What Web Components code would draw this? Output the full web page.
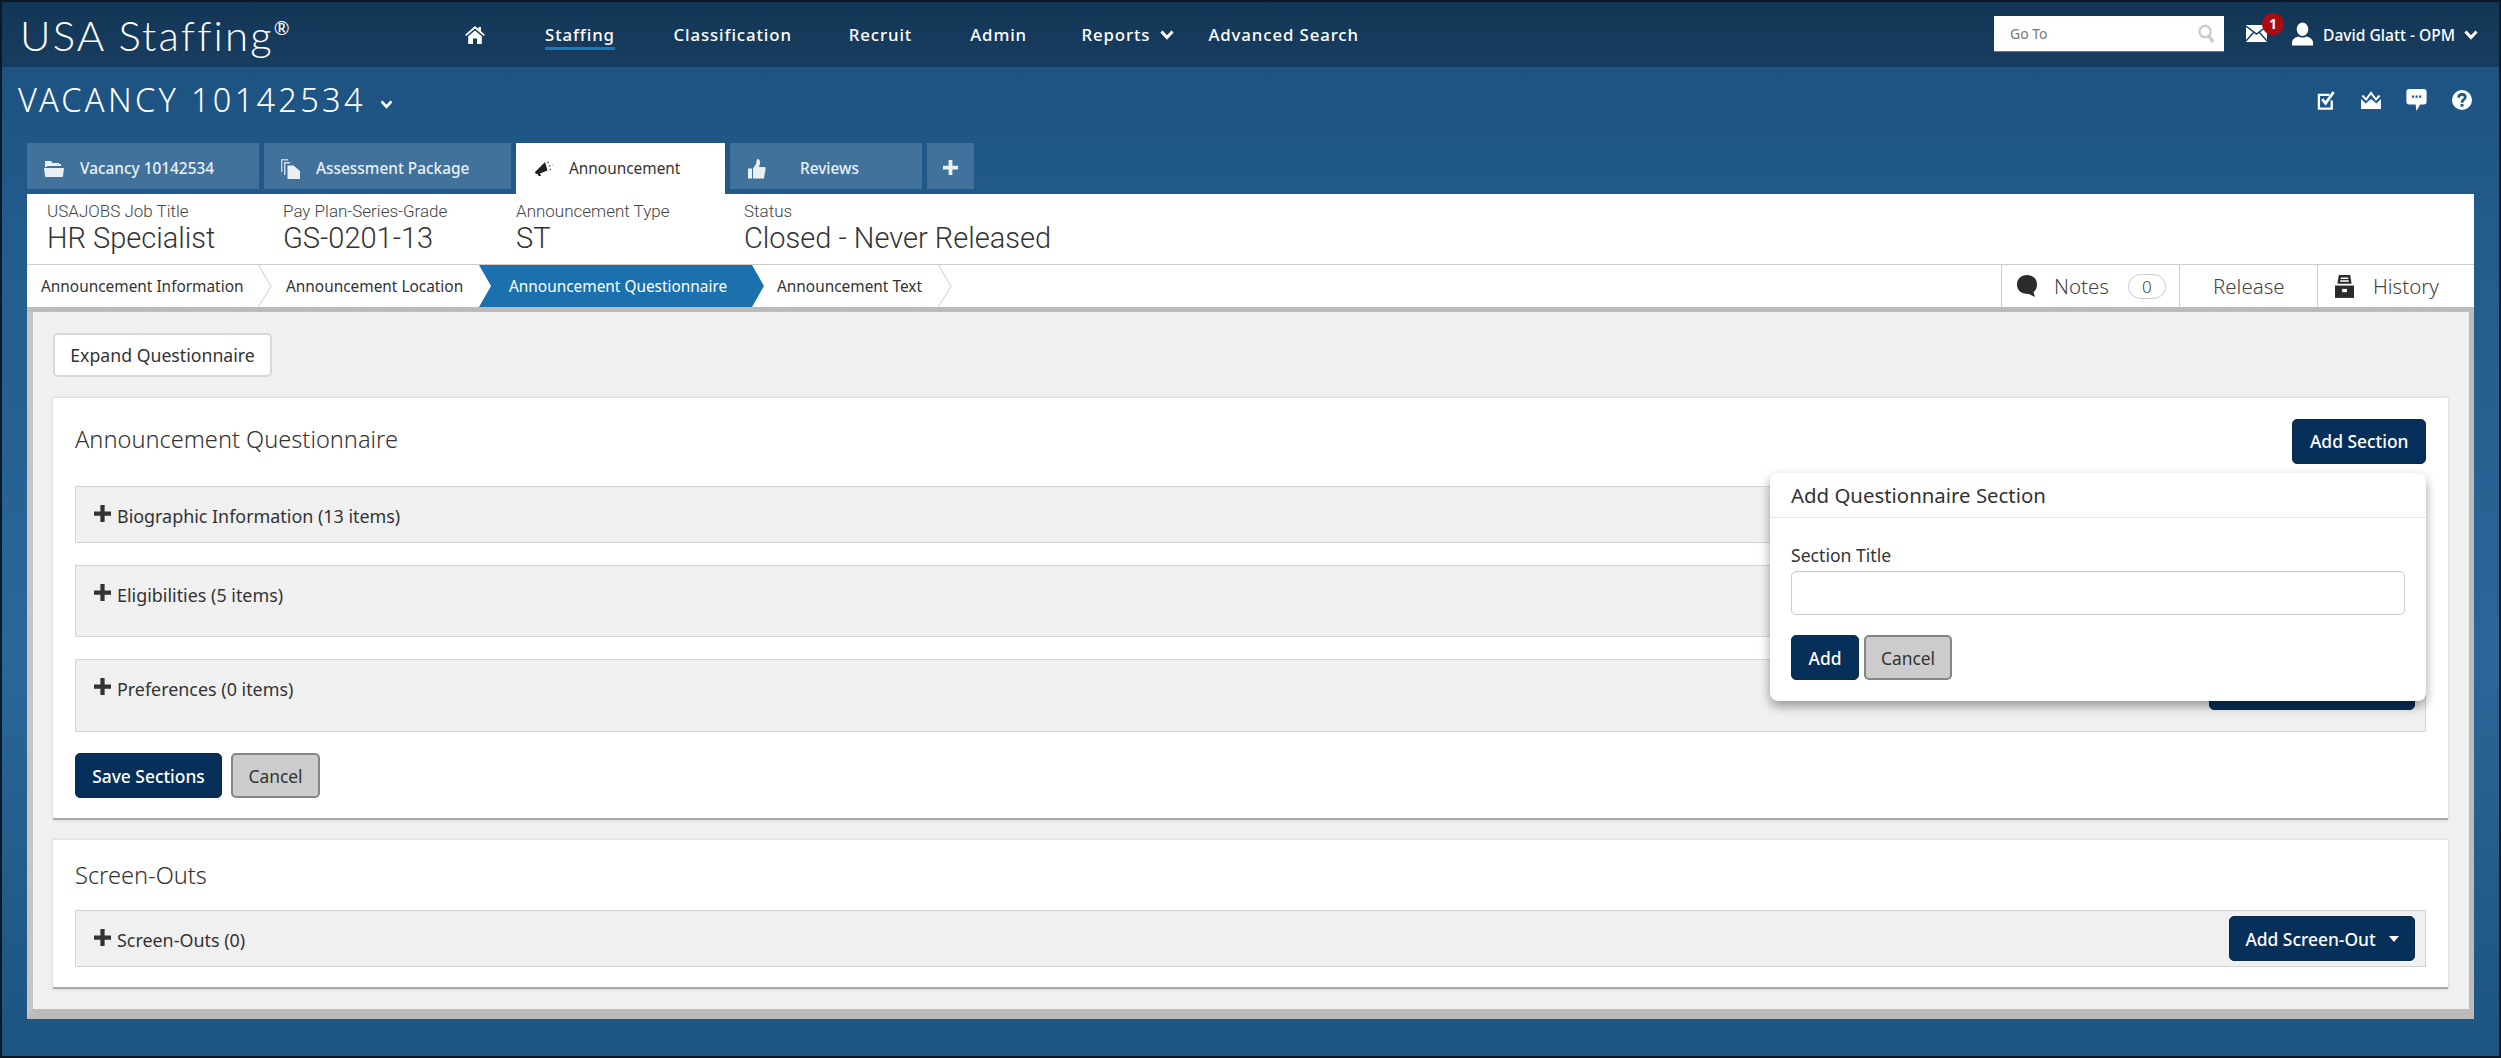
<!DOCTYPE html>
<html lang="en">
<head>
<meta charset="utf-8">
<title>USA Staffing - Vacancy 10142534</title>
<style>
  html, body { margin: 0; padding: 0; }
  body { width: 2501px; height: 1058px; overflow: hidden; font-family: "Noto Sans", "Open Sans", sans-serif; color: #333; }
</style>
</head>
<body>
<usa-page>
  <usa-header slot="header"></usa-header>
  <vacancy-bar slot="bar" title-text="VACANCY 10142534"></vacancy-bar>
  <tab-strip slot="tabs"></tab-strip>
  <info-summary slot="panel"></info-summary>
  <step-nav slot="panel"></step-nav>
  <panel-body slot="panel">
    <usa-button kind="light" style="width:219px">Expand Questionnaire</usa-button>

    <q-card heading="Announcement Questionnaire" style="height:422px">
      <usa-button slot="action" kind="primary" style="width:133.6px">Add Section</usa-button>
      <q-row style="height:57px">Biographic Information (13 items)</q-row>
      <q-row style="height:72px">Eligibilities (5 items)</q-row>
      <q-row style="height:73px">Preferences (0 items)
        <usa-button slot="action" kind="primary" style="width:206px"></usa-button>
      </q-row>
      <div slot="footer" style="display:flex;gap:9px">
        <usa-button kind="primary" style="width:147px">Save Sections</usa-button>
        <usa-button kind="cancel" style="width:89px">Cancel</usa-button>
      </div>
      <add-section-popover slot="over"></add-section-popover>
    </q-card>

    <q-card heading="Screen-Outs" compact style="height:149px;margin-top:20px">
      <q-row style="height:57px">Screen-Outs (0)
        <usa-button slot="action" kind="primary" caret style="width:186px">Add Screen-Out</usa-button>
      </q-row>
    </q-card>
  </panel-body>
</usa-page>

<script>
const ICONS = {
  home: '<svg viewBox="0 0 20 18" width="20" height="18"><path fill="currentColor" d="M10 0 L13.5 3 V1 H16 V5.2 L20 8.8 L18.7 10 L10 2.6 L1.3 10 L0 8.8Z M3.2 10.2 L10 4.4 L16.8 10.2 V18 H12 V12.5 H8 V18 H3.2Z"/></svg>',
  folder: '<svg viewBox="0 0 20 16" width="20" height="16"><path fill="currentColor" d="M1 0 H7 L8.5 2 H15 L15 3 H17 V5 H3 V6 H1Z"/><path fill="currentColor" d="M0 7 H20 L19 15 Q19 16 18 16 H2 Q1 16 1 15Z"/></svg>',
  files: '<svg viewBox="0 0 19 20" width="19" height="20"><path fill="none" stroke="currentColor" stroke-opacity=".75" stroke-width="1.4" d="M7 .7 H.7 V13"/><path fill="none" stroke="currentColor" stroke-opacity=".85" stroke-width="1.4" d="M9 3.7 H3.7 V16"/><path fill="currentColor" d="M6.5 6.5 H12.5 L19 12 V20 H6.5Z"/></svg>',
  bullhorn: '<svg viewBox="0 0 18 15" width="18" height="15"><path fill="#222" d="M0 11 L10 1 L12.5 9.5 L5 12.4 L6 15 L3.5 15 L2.6 12.8 Q0 13.5 0 11Z"/><path fill="none" stroke="#555" stroke-width="1.3" stroke-dasharray="1.6 1.6" d="M12.5 2 L14.5 0 M14 5 L17.5 4 M14.5 8 L17 9"/></svg>',
  thumb: '<svg viewBox="0 0 19 20" width="19" height="20"><path fill="currentColor" d="M1 9.5 H5 V19.5 H1Z M6 9.5 L9 5 L10 0 Q13.5 0 13 4.5 L12 8 H17.5 Q19 8 18.6 9.8 L17 19.5 H6Z"/></svg>',
  plus: '<svg viewBox="0 0 16 16" width="16" height="16"><path fill="currentColor" d="M6 0 H10 V6 H16 V10 H10 V16 H6 V10 H0 V6 H6Z"/></svg>',
  chevron: '<svg viewBox="0 0 14 10" width="14" height="10"><path fill="none" stroke="currentColor" stroke-width="3" d="M1.5 1.5 L7 7.5 L12.5 1.5"/></svg>',
  search: '<svg viewBox="0 0 18 20" width="17" height="20"><circle cx="7.5" cy="7.5" r="6" fill="none" stroke="#ccc" stroke-width="2.4"/><path stroke="#ccc" stroke-width="3.4" d="M11.5 12 L16 18.5"/></svg>',
  mail: '<svg viewBox="0 0 21 17" width="21" height="17"><path fill="currentColor" d="M0 0 H21 V17 H0Z"/><path fill="none" stroke="#14395b" stroke-width="1.4" d="M0 1 L10.5 9 L21 1 M0 16 L7.5 7.5 M21 16 L13.5 7.5"/></svg>',
  user: '<svg viewBox="0 0 22 24" width="21" height="24"><ellipse cx="11" cy="7" rx="6" ry="7" fill="currentColor"/><path fill="currentColor" d="M0 24 V20 Q1 16 7 14.5 Q11 17 15 14.5 Q21 16 22 20 V24Z"/></svg>',
  check: '<svg viewBox="0 0 20 20" width="19" height="19"><path fill="none" stroke="currentColor" stroke-width="2.4" d="M15.5 10 V18.5 H2 V4 H13"/><path fill="none" stroke="currentColor" stroke-width="3" d="M5.5 8.5 L9 13 L17.5 1"/></svg>',
  mailopen: '<svg viewBox="0 0 22 20" width="20" height="18"><path fill="currentColor" d="M0 9 L5 14 L11 9 L17 14 L22 9 V20 H0Z"/><path fill="none" stroke="currentColor" stroke-width="2.2" d="M1.5 5 L5.5 9.5 L11 2 L16.5 9.5 L20.5 5"/></svg>',
  comment: '<svg viewBox="0 0 22 24" width="21" height="22"><path fill="currentColor" d="M3 0 H19 Q22 0 22 3 V14 Q22 17 19 17 H15 L11 24 L10 17 H3 Q0 17 0 14 V3 Q0 0 3 0Z"/><path fill="#1e5683" d="M6 7 H8.4 V9.6 H6Z M9.9 7 H12.3 V9.6 H9.9Z M13.8 7 H16.2 V9.6 H13.8Z"/></svg>',
  question: '<svg viewBox="0 0 22 22" width="20" height="20"><circle cx="11" cy="11" r="11" fill="currentColor"/><path fill="none" stroke="#1e5683" stroke-width="3" d="M7.2 8.5 Q7.5 4.8 11 4.8 Q14.6 4.8 14.6 8 Q14.6 9.8 12.6 10.9 Q11 11.8 11 14"/><path fill="#1e5683" d="M9.4 15.4 H12.6 V18.4 H9.4Z"/></svg>',
  bubble: '<svg viewBox="0 0 20 22" width="20" height="22"><path fill="#2b2b2b" d="M10 0 C16 0 20 4 20 9.5 C20 14 17.5 16.5 16.5 17 L18 22 L12 19 C5 19.5 0 15.5 0 9.5 C0 4 4 0 10 0Z"/></svg>',
  archive: '<svg viewBox="0 0 20 24" width="19" height="23"><path fill="#2b2b2b" d="M4 0 H16 L17.5 9 H2.5Z"/><path fill="#fff" d="M6 2.5 H14 V4 H6Z M5.5 5.5 H14.5 V7 H5.5Z"/><path fill="#2b2b2b" d="M0 11 H20 V24 H0Z"/><path fill="#fff" d="M7.5 14.5 H12.5 V18 H7.5Z"/></svg>'
};

class UsaPage extends HTMLElement {
  constructor() {
    super();
    this.attachShadow({mode: 'open'});
    this.shadowRoot.innerHTML = `
      <style>
        :host {
          display: flex; flex-direction: column;
          box-sizing: border-box; width: 2501px; height: 1058px;
          border: 2px solid #0b1a28;
          background: linear-gradient(180deg, #1b4e7c 0, #225c8c 220px, #2a6698 660px, #1d5682 1020px);
        }
        .panel { margin: 0 25px; background: #fff; display: flex; flex-direction: column; }
      </style>
      <slot name="header"></slot>
      <slot name="bar"></slot>
      <slot name="tabs"></slot>
      <div class="panel"><slot name="panel"></slot></div>
    `;
  }
}

class UsaHeader extends HTMLElement {
  constructor() {
    super();
    this.attachShadow({mode: 'open'});
    this.shadowRoot.innerHTML = `
      <style>
        :host {
          display: flex; align-items: center; height: 65px; color: #fff;
          background: linear-gradient(180deg, #133655, #173d60);
        }
        .logo { font: 300 42px "Lato", sans-serif; letter-spacing: 2.1px; margin-left: 18px; width: 445px; display: flex; height: 65px; align-items: center; }
        .logo sup { font-size: 19px; font-weight: 400; letter-spacing: 0; line-height: 1; align-self: flex-start; margin: 16px 0 0 0; }
        nav { display: flex; align-items: center; height: 65px; font: 500 16.8px "Noto Sans", sans-serif; letter-spacing: .9px; }
        nav a { display: block; position: relative; line-height: 24px; white-space: nowrap; }
        nav svg { display: block; }
        .on::after { content: ""; position: absolute; left: 0; right: 0; bottom: -3px; height: 3px; background: #1a7abf; }
        .right { margin-left: auto; display: flex; align-items: center; height: 65px; }
        .goto {
          box-sizing: border-box; width: 230px; height: 35px; background: #fff; color: #777;
          display: flex; align-items: center; justify-content: space-between;
          font: 14px "Noto Sans", sans-serif; padding: 0 9px 0 16px; margin-top: -2px;
          box-shadow: 0 1px 0 #5d7d99;
        }
        .mail { position: relative; margin: -2px 0 0 22px; width: 21px; height: 17px; }
        .mail svg { display: block; }
        .badge {
          position: absolute; left: 16px; top: -12px; width: 22px; height: 22px; border-radius: 50%;
          background: #a90d12; color: #fff; font: 700 14px/22px "Noto Sans", sans-serif; text-align: center;
        }
        .user { margin: -2px 0 0 25px; display: flex; }
        .name { font: 500 15.6px "Noto Sans", sans-serif; margin-left: 10px; white-space: nowrap; width: 141px; }
        .chev { margin-right: 21px; display: flex; }
      </style>
      <div class="logo">USA Staffing<sup>®</sup></div>
      <nav>
        <a style="color:#fff">${ICONS.home}</a>
        <a class="on" style="margin-left:60px">Staffing</a>
        <a style="margin-left:58.6px">Classification</a>
        <a style="margin-left:57px">Recruit</a>
        <a style="margin-left:58px">Admin</a>
        <a style="margin-left:54.5px">Reports</a>
        <a style="margin-left:10px">${ICONS.chevron}</a>
        <a style="margin-left:34px">Advanced Search</a>
      </nav>
      <div class="right">
        <div class="goto"><span>Go To</span>${ICONS.search}</div>
        <div class="mail">${ICONS.mail}<span class="badge">1</span></div>
        <div class="user">${ICONS.user}</div>
        <div class="name">David Glatt - OPM</div>
        <div class="chev">${ICONS.chevron}</div>
      </div>
    `;
  }
}

class VacancyBar extends HTMLElement {
  constructor() {
    super();
    this.attachShadow({mode: 'open'});
    this.shadowRoot.innerHTML = `
      <style>
        :host { display: flex; align-items: flex-start; height: 76px; color: #fff; }
        h1 { margin: 10px 0 0 16px; font: 300 32.5px/46px "Noto Sans", sans-serif; letter-spacing: 3.3px; white-space: nowrap; }
        .down { margin: 33px 0 0 14px; display: flex; }
        .down svg { width: 13px; height: 9px; }
        .tools { margin-left: auto; margin-top: 22px; margin-right: 27px; display: flex; align-items: center; gap: 25px; }
        .tools svg { display: block; }
      </style>
      <h1></h1>
      <span class="down">${ICONS.chevron}</span>
      <div class="tools">${ICONS.check}${ICONS.mailopen}${ICONS.comment}${ICONS.question}</div>
    `;
    this.shadowRoot.querySelector('h1').textContent = this.getAttribute('title-text');
  }
}

class TabStrip extends HTMLElement {
  constructor() {
    super();
    this.attachShadow({mode: 'open'});
    const tabs = [
      {label: 'Vacancy 10142534', icon: 'folder', w: 232, pad: 17, gap: 16},
      {label: 'Assessment Package', icon: 'files', w: 247, pad: 17, gap: 16},
      {label: 'Announcement', icon: 'bullhorn', w: 209, pad: 19, gap: 16, on: true},
      {label: 'Reviews', icon: 'thumb', w: 192, pad: 17, gap: 34},
      {label: '', icon: 'plus', w: 47, pad: 16, gap: 0, small: true}
    ];
    this.shadowRoot.innerHTML = `
      <style>
        :host { display: flex; gap: 5px; height: 51px; padding-left: 25px; align-items: flex-start; }
        .tab {
          box-sizing: border-box; height: 46px; display: flex; align-items: center; padding-top: 5px;
          background: #41729b; color: #e9f0f5;
          font: 500 15.4px "Noto Sans", sans-serif; white-space: nowrap;
        }
        .tab.on { height: 51px; background: #fff; color: #333; font-weight: 400; padding-bottom: 5px; }
        .tab svg { display: block; flex: none; }
        .small { padding-top: 0; }
        .small svg { width: 15px; height: 15px; margin-top: 3px; }
      </style>
      ${tabs.map(t => `
        <div class="tab${t.on ? ' on' : ''}${t.small ? ' small' : ''}" style="width:${t.w}px;padding-left:${t.pad}px">
          ${ICONS[t.icon]}<span style="margin-left:${t.gap}px">${t.label}</span>
        </div>`).join('')}
    `;
  }
}

class InfoSummary extends HTMLElement {
  constructor() {
    super();
    this.attachShadow({mode: 'open'});
    const items = [
      ['USAJOBS Job Title', 'HR Specialist', 236],
      ['Pay Plan-Series-Grade', 'GS-0201-13', 233],
      ['Announcement Type', 'ST', 228],
      ['Status', 'Closed - Never Released', 600]
    ];
    this.shadowRoot.innerHTML = `
      <style>
        :host { display: flex; box-sizing: border-box; height: 71px; padding: 6.5px 0 0 20px; border-bottom: 1px solid #ccc; }
        .label { font: 300 17px/20px "Roboto", sans-serif; color: #444; white-space: nowrap; }
        .value { font: 300 29px/34px "Roboto", sans-serif; color: #333; white-space: nowrap; }
      </style>
      ${items.map(i => `<div style="width:${i[2]}px"><div class="label">${i[0]}</div><div class="value">${i[1]}</div></div>`).join('')}
    `;
  }
}

class StepNav extends HTMLElement {
  constructor() {
    super();
    this.attachShadow({mode: 'open'});
    const chevron = '<svg class="c" viewBox="0 0 14 42" width="14" height="42"><path fill="none" stroke="#ccc" d="M0.5 0 L13 21 L0.5 42"/></svg>';
    this.shadowRoot.innerHTML = `
      <style>
        :host { display: flex; box-sizing: border-box; height: 47px; border-bottom: 5px solid #bbb; font: 15.4px "Noto Sans", sans-serif; color: #333; }
        .step { position: relative; display: flex; align-items: center; white-space: nowrap; height: 42px; box-sizing: border-box; }
        .c { position: absolute; top: 0; }
        .on {
          background: #1a71ae; color: #fff;
          clip-path: polygon(0 0, 273px 0, 285px 50%, 273px 100%, 0 100%, 12px 50%);
        }
        .act { margin-left: auto; display: flex; height: 42px; }
        .act div { box-sizing: border-box; display: flex; align-items: center; border-left: 1px solid #ccc; font: 300 20.5px "Noto Sans", sans-serif; color: #444; }
        .pill { box-sizing: border-box; width: 38px; height: 25px; border: 1px solid #ccc; border-radius: 13px; font: 300 17px/23px "Noto Sans", sans-serif; text-align: center; margin-left: 19px; }
        svg { display: block; flex: none; }
      </style>
      <div class="step" style="width:231px;padding-left:14px">Announcement Information${chevron.replace('class="c"', 'class="c" style="left:231px"')}</div>
      <div class="step" style="width:221px;padding-left:28px">Announcement Location</div>
      <div class="step on" style="width:285px;padding-left:30px">Announcement Questionnaire</div>
      <div class="step" style="width:174px;padding-left:13px">Announcement Text${chevron.replace('class="c"', 'class="c" style="left:174px"')}</div>
      <div class="act">
        <div style="width:178px;padding-left:15px">${ICONS.bubble}<span style="margin-left:17px">Notes</span><span class="pill">0</span></div>
        <div style="width:138px;padding-left:33px">Release</div>
        <div style="width:157px;padding-left:17px">${ICONS.archive}<span style="margin-left:19px">History</span></div>
      </div>
    `;
  }
}

class PanelBody extends HTMLElement {
  constructor() {
    super();
    this.attachShadow({mode: 'open'});
    this.shadowRoot.innerHTML = `
      <style>
        :host {
          display: block; box-sizing: border-box; height: 707px; padding: 21px 21px 0 20px;
          background: #f0f0f0; border-style: solid; border-color: #c6c6c6 #bbb #bbb #c6c6c6;
          border-width: 0 5px 10px 6px;
        }
        ::slotted(q-card:first-of-type) { margin-top: 21px; }
      </style>
      <slot></slot>
    `;
  }
}

class QCard extends HTMLElement {
  constructor() {
    super();
    this.attachShadow({mode: 'open'});
    const compact = this.hasAttribute('compact');
    this.shadowRoot.innerHTML = `
      <style>
        :host {
          display: block; position: relative; box-sizing: border-box; background: #fff;
          border-bottom: 2px solid #a9a9a9; padding: 0 22px;
          box-shadow: 0 0 3px rgba(0,0,0,.16);
        }
        .head { display: flex; align-items: center; justify-content: space-between; height: ${compact ? 70 : 88}px; box-sizing: border-box; padding-bottom: ${compact ? 0 : 2}px; }
        h2 { margin: ${compact ? 0 : '-4px'} 0 0; font: 300 23.6px "Noto Sans", sans-serif; color: #333; }
        .rows { display: flex; flex-direction: column; gap: 22px; }
        .foot { margin-top: 21px; }
        .foot:empty { display: none; }
      </style>
      <div class="head"><h2></h2><slot name="action"></slot></div>
      <div class="rows"><slot></slot></div>
      <div class="foot"><slot name="footer"></slot></div>
      <slot name="over"></slot>
    `;
    this.shadowRoot.querySelector('h2').textContent = this.getAttribute('heading');
  }
}

class QRow extends HTMLElement {
  constructor() {
    super();
    this.attachShadow({mode: 'open'});
    this.shadowRoot.innerHTML = `
      <style>
        :host {
          display: flex; box-sizing: border-box; align-items: flex-start; padding: 0 10px 0 18px;
          background: #f0f0f0; border: 1px solid #d4d4d4; font: 17.9px/26px "Noto Sans", sans-serif; color: #333;
        }
        .plus { margin: 18px 6px 0 0; width: 17px; height: 17px; flex: none; color: #333; }
        .plus svg { width: 17px; height: 17px; display: block; }
        .t { margin-top: 16px; white-space: nowrap; }
        .a { margin-left: auto; margin-top: 5px; }
      </style>
      <span class="plus">${ICONS.plus}</span>
      <span class="t"><slot></slot></span>
      <span class="a"><slot name="action"></slot></span>
    `;
  }
}

class UsaButton extends HTMLElement {
  constructor() {
    super();
    this.attachShadow({mode: 'open'});
    this.shadowRoot.innerHTML = `
      <style>
        :host {
          display: inline-flex; box-sizing: border-box; height: 45px; align-items: center; justify-content: center;
          border-radius: 5px; font: 500 17.4px "Noto Sans", sans-serif; white-space: nowrap; vertical-align: top;
        }
        :host([kind="primary"]) { background: #06305a; border: 1px solid #0a2a48; color: #fff; }
        :host([kind="cancel"]) { background: #ccc; border: 2px solid #858585; color: #333; font-weight: 400; }
        :host([kind="light"]) { background: #fff; border: 2px solid #d8d8d8; color: #333; height: 44px; font-weight: 400; font-size: 17.7px; }
        .caret { display: none; margin-left: 13px; width: 0; height: 0; border: 5px solid transparent; border-top: 6px solid #fff; border-bottom: 0; }
        :host([caret]) .caret { display: block; }
      </style>
      <slot></slot><span class="caret"></span>
    `;
  }
}

class AddSectionPopover extends HTMLElement {
  constructor() {
    super();
    this.attachShadow({mode: 'open'});
    this.shadowRoot.innerHTML = `
      <style>
        :host {
          position: absolute; top: 75px; right: 22px; width: 656px; height: 228px; box-sizing: border-box;
          background: #fff; border-radius: 8px; box-shadow: 0 5px 11px rgba(0,0,0,.38); z-index: 2;
        }
        .head { height: 44px; padding-left: 21px; border-bottom: 1px solid #e6e6e6; font: 400 20.4px/44px "Noto Sans", sans-serif; color: #333; }
        .body { padding: 25px 21px 0; }
        label { display: block; font: 17.6px/24px "Noto Sans", sans-serif; color: #333; }
        .input { box-sizing: border-box; height: 44px; margin-top: 4px; border: 1px solid #ccc; border-radius: 5px; box-shadow: inset 0 1px 1px rgba(0,0,0,.06); }
        .btns { margin-top: 20px; display: flex; gap: 5px; }
      </style>
      <div class="head">Add Questionnaire Section</div>
      <div class="body">
        <label>Section Title</label>
        <div class="input"></div>
        <div class="btns">
          <usa-button kind="primary" style="width:68px">Add</usa-button>
          <usa-button kind="cancel" style="width:88px">Cancel</usa-button>
        </div>
      </div>
    `;
  }
}

customElements.define('usa-page', UsaPage);
customElements.define('usa-header', UsaHeader);
customElements.define('vacancy-bar', VacancyBar);
customElements.define('tab-strip', TabStrip);
customElements.define('info-summary', InfoSummary);
customElements.define('step-nav', StepNav);
customElements.define('panel-body', PanelBody);
customElements.define('q-card', QCard);
customElements.define('q-row', QRow);
customElements.define('usa-button', UsaButton);
customElements.define('add-section-popover', AddSectionPopover);
</script>
</body>
</html>
